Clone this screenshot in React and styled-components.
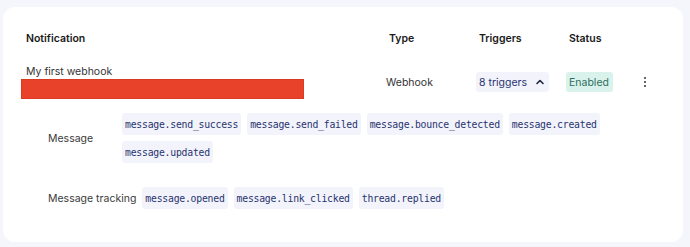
import React from 'react';
import styled, { createGlobalStyle } from 'styled-components';

const GlobalStyle = createGlobalStyle`
  html, body {
    margin: 0;
    padding: 0;
    background: #f5f6fb;
  }
  body {
    font-family: "Inter", "Noto Sans", sans-serif;
    color: #2e2e2e;
  }
`;

const Page = styled.div`
  width: 690px;
  height: 247px;
  padding: 7px 7px 5px 3px;
  box-sizing: border-box;
`;

const Card = styled.div`
  background: #ffffff;
  border-radius: 12px;
  height: 235px;
  box-sizing: border-box;
  padding: 24px 0 0 20px;
`;

const Row = styled.div`
  display: grid;
  grid-template-columns: 363px 90px 90px 70px 1fr;
  align-items: center;
`;

const HeadRow = styled(Row)`
  height: 14px;
  margin-bottom: 20px;
`;

const HeadCell = styled.div`
  font-size: 10.5px;
  font-weight: 600;
  color: #1a1a1a;
  padding-left: ${p => p.$pad || 0}px;
`;

const NameCell = styled.div`
  display: flex;
  flex-direction: column;
  padding-left: 3px;
`;

const Name = styled.div`
  font-size: 10.5px;
  color: #333;
  line-height: 14px;
`;

const Redacted = styled.div`
  margin-left: -5px;
  width: 283px;
  height: 20px;
  background: #e8432a;
  border: 1px solid #d83a22;
  box-sizing: border-box;
`;

const Text = styled.div`
  font-size: 10.5px;
  color: #333;
`;

const Pill = styled.div`
  display: inline-flex;
  align-items: center;
  gap: 8px;
  justify-self: start;
  height: 20px;
  padding: 0 4px 0 3px;
  border-radius: 3px;
  font-size: 10.5px;
  background: ${p => (p.$tone === 'green' ? '#d9f3ec' : '#f3f4fb')};
  color: ${p => (p.$tone === 'green' ? '#2e6e5f' : '#2a3370')};
`;

const Kebab = styled.div`
  padding-left: 7px;
  display: flex;
  align-items: center;
`;

const Groups = styled.div`
  display: flex;
  flex-direction: column;
  gap: 24px;
  margin-top: 14px;
  padding-left: 25px;
`;

const Group = styled.div`
  display: flex;
  align-items: center;
  gap: 6px;
`;

const GroupLabel = styled.div`
  min-width: 68px;
  font-size: 10.5px;
  color: #3a3a3a;
  white-space: nowrap;
`;

const Tags = styled.div`
  display: flex;
  flex-wrap: wrap;
  gap: 6px 6px;
  width: 490px;
`;

const Tag = styled.span`
  display: inline-flex;
  align-items: center;
  height: 22px;
  padding: 0 3px;
  border-radius: 3px;
  background: #f3f4fb;
  color: #28336f;
  font-family: "DejaVu Sans Mono", "Liberation Mono", monospace;
  font-size: 9.8px;
  letter-spacing: -0.24px;
`;

const groups = [
  {
    label: 'Message',
    tags: [
      'message.send_success',
      'message.send_failed',
      'message.bounce_detected',
      'message.created',
      'message.updated',
    ],
  },
  {
    label: 'Message tracking',
    tags: ['message.opened', 'message.link_clicked', 'thread.replied'],
  },
];

const ChevronUp = () => (
  <svg width="10" height="10" viewBox="0 0 10 10">
    <path d="M2 6.5 L5 3.5 L8 6.5" fill="none" stroke="#1f2540" strokeWidth="1.6" strokeLinecap="round" strokeLinejoin="round" />
  </svg>
);

const Dots = () => (
  <svg width="4" height="12" viewBox="0 0 4 12">
    <circle cx="2" cy="2" r="1.1" fill="#444" />
    <circle cx="2" cy="6" r="1.1" fill="#444" />
    <circle cx="2" cy="10" r="1.1" fill="#444" />
  </svg>
);

export default function App() {
  return (
    <Page>
      <GlobalStyle />
      <Card>
        <HeadRow>
          <HeadCell $pad={3}>Notification</HeadCell>
          <HeadCell $pad={3}>Type</HeadCell>
          <HeadCell $pad={3}>Triggers</HeadCell>
          <HeadCell $pad={3}>Status</HeadCell>
          <div />
        </HeadRow>
        <Row>
          <NameCell>
            <Name>My first webhook</Name>
            <Redacted />
          </NameCell>
          <Text>Webhook</Text>
          <Pill>
            8 triggers
            <ChevronUp />
          </Pill>
          <Pill $tone="green">Enabled</Pill>
          <Kebab>
            <Dots />
          </Kebab>
        </Row>
        <Groups>
          {groups.map(g => (
            <Group key={g.label}>
              <GroupLabel>{g.label}</GroupLabel>
              <Tags>
                {g.tags.map(t => (
                  <Tag key={t}>{t}</Tag>
                ))}
              </Tags>
            </Group>
          ))}
        </Groups>
      </Card>
    </Page>
  );
}
